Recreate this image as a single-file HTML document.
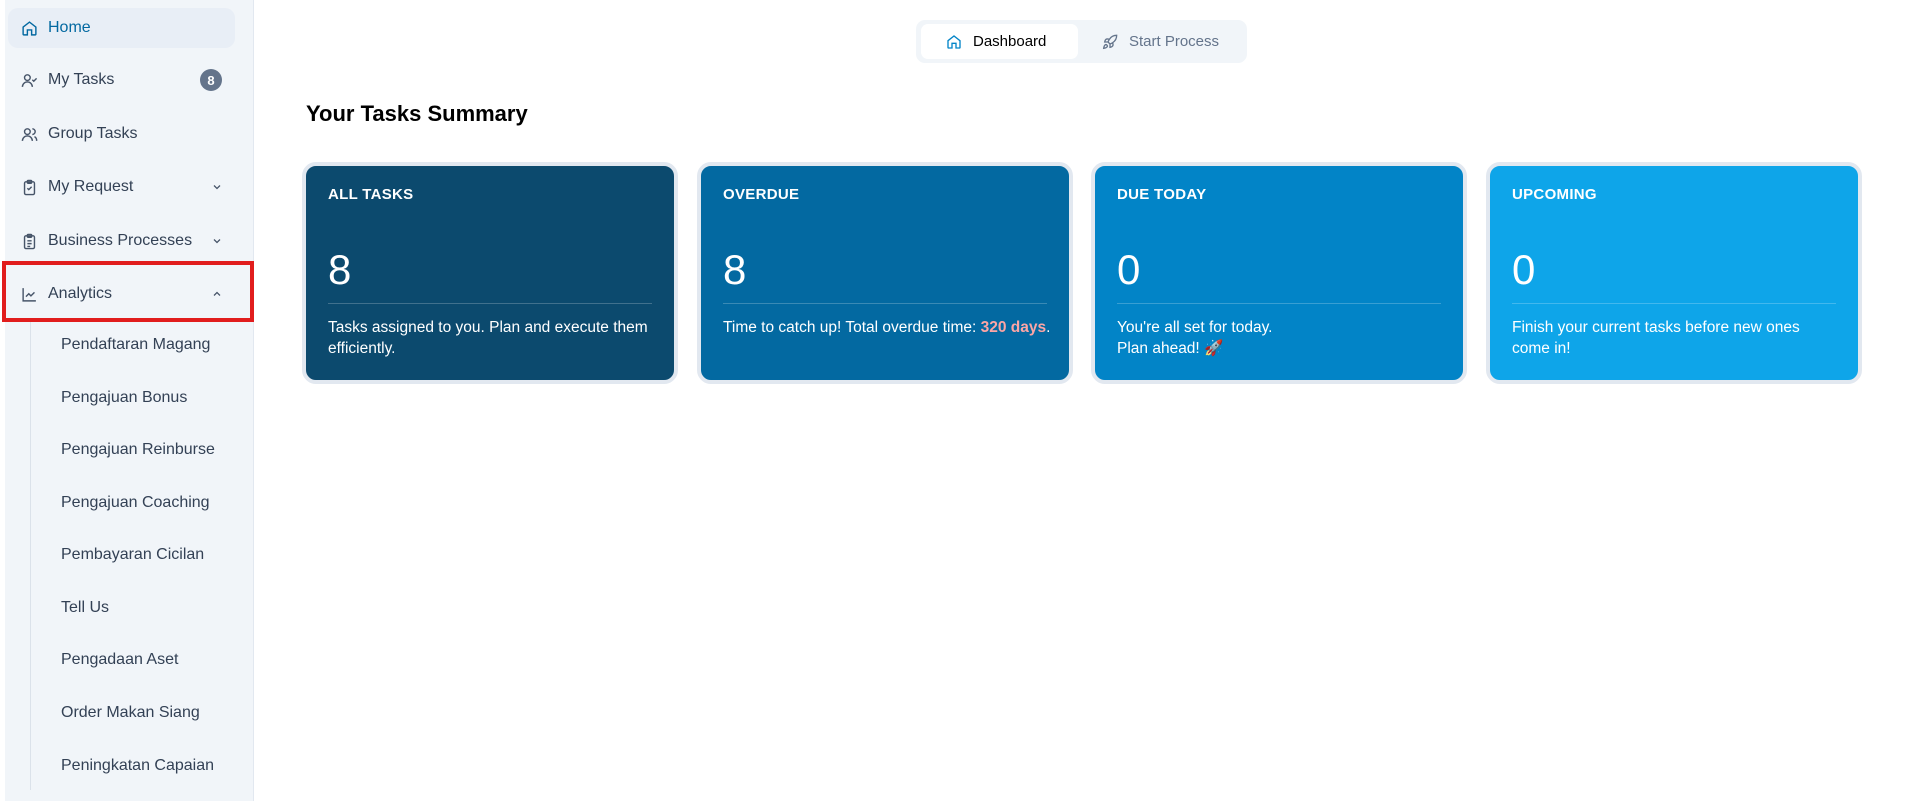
<!DOCTYPE html>
<html><head><meta charset="utf-8"><style>
*{box-sizing:border-box;margin:0;padding:0}
body{width:1908px;height:801px;overflow:hidden;background:#fff;font-family:"Liberation Sans",sans-serif;position:relative}
.sb{position:absolute;left:5px;top:0;width:249px;height:801px;background:#f1f5f9;border-right:1px solid #e2e8f0}
.it{position:absolute;left:3px;width:227px;height:40px;display:flex;align-items:center;font-size:16px;color:#334155}
.it svg{position:absolute;left:13px;width:17px;height:17px}
.it span{position:absolute;left:40px}
.it svg.ch{left:203px;width:12px;height:12px}
.home{background:#e8eef6;border-radius:10px;color:#0369a1}
.badge{position:absolute;left:192px;width:22px;height:22px;border-radius:50%;background:#64748b;color:#fff;font-size:13px;font-weight:bold;display:flex;align-items:center;justify-content:center}
.red{position:absolute;left:2px;top:261px;width:252px;height:61px;border:4px solid #e11d1d}
.vl{position:absolute;left:30px;top:322px;width:1px;height:468px;background:#dbe2ea}
.sub{position:absolute;left:61px;font-size:16px;color:#334155;transform:translateY(-50%)}
.tg{position:absolute;left:916px;top:20px;width:331px;height:43px;background:#f1f5f9;border-radius:9px}
.tg .a{position:absolute;left:5px;top:4px;width:157px;height:35px;background:#fff;border-radius:7px;font-size:15px;color:#000;display:flex;align-items:center;padding-left:52px}
.tg .b{position:absolute;left:213px;top:13px;font-size:15px;color:#64748b}
h1{position:absolute;left:306px;top:101px;font-size:22px;font-weight:bold;color:#000}
.card{position:absolute;top:162px;width:376px;height:222px;border-radius:14px;border:4px solid #e2e8f0;color:#fff}
.card .l{position:absolute;left:22px;top:20px;font-size:15px;font-weight:bold;letter-spacing:.3px}
.card .num{position:absolute;left:22px;top:80px;font-size:42px;font-weight:300}
.card .hr{position:absolute;left:22px;right:22px;top:137px;height:1px;background:rgba(255,255,255,.22)}
.card .d{position:absolute;left:22px;right:18px;top:151px;font-size:15.5px;line-height:21px}
</style></head><body>
<div class="sb">
<div class="it home" style="top:8px"><svg viewBox="0 0 24 24" fill="none" stroke="#0369a1" stroke-width="2"><path d="M3 10l9-7 9 7v10a1 1 0 0 1-1 1h-5v-7H9v7H4a1 1 0 0 1-1-1z"/></svg><span>Home</span></div>
<div class="it" style="top:60px"><svg viewBox="0 0 24 24" fill="none" stroke="#475569" stroke-width="2"><circle cx="9" cy="8" r="4"/><path d="M2 21a7 7 0 0 1 14 0M16 11l2 2 4-4"/></svg><span>My Tasks</span><div class="badge">8</div></div>
<div class="it" style="top:114px"><svg viewBox="0 0 24 24" fill="none" stroke="#475569" stroke-width="2"><circle cx="9" cy="8" r="4"/><path d="M2 21a7 7 0 0 1 14 0M16 4a4 4 0 0 1 0 8M19 15a6 6 0 0 1 3 6"/></svg><span>Group Tasks</span></div>
<div class="it" style="top:167px"><svg viewBox="0 0 24 24" fill="none" stroke="#475569" stroke-width="2"><rect x="5" y="4" width="14" height="18" rx="2"/><rect x="9" y="2" width="6" height="4" rx="1"/><path d="M9 13l2 2 4-4"/></svg><span>My Request</span><svg class="ch" viewBox="0 0 24 24" fill="none" stroke="#475569" stroke-width="2.5"><path d="M6 9l6 6 6-6"/></svg></div>
<div class="it" style="top:221px"><svg viewBox="0 0 24 24" fill="none" stroke="#475569" stroke-width="2"><rect x="5" y="4" width="14" height="18" rx="2"/><rect x="9" y="2" width="6" height="4" rx="1"/><path d="M9 11h6M9 15h6M9 19h4"/></svg><span>Business Processes</span><svg class="ch" viewBox="0 0 24 24" fill="none" stroke="#475569" stroke-width="2.5"><path d="M6 9l6 6 6-6"/></svg></div>
<div class="it" style="top:274px"><svg viewBox="0 0 24 24" fill="none" stroke="#475569" stroke-width="2"><path d="M3 3v18h18M7 15l4-4 3 3 5-5"/></svg><span>Analytics</span><svg class="ch" viewBox="0 0 24 24" fill="none" stroke="#475569" stroke-width="2.5"><path d="M6 15l6-6 6 6"/></svg></div>
</div>
<div class="red"></div>
<div class="vl"></div>
<div class="sub" style="top:345px">Pendaftaran Magang</div>
<div class="sub" style="top:398px">Pengajuan Bonus</div>
<div class="sub" style="top:450px">Pengajuan Reinburse</div>
<div class="sub" style="top:503px">Pengajuan Coaching</div>
<div class="sub" style="top:555px">Pembayaran Cicilan</div>
<div class="sub" style="top:608px">Tell Us</div>
<div class="sub" style="top:660px">Pengadaan Aset</div>
<div class="sub" style="top:713px">Order Makan Siang</div>
<div class="sub" style="top:766px">Peningkatan Capaian</div>
<div class="tg"><div class="a"><svg style="position:absolute;left:25px;top:10px" width="16" height="16" viewBox="0 0 24 24" fill="none" stroke="#0284c7" stroke-width="2"><path d="M3 10l9-7 9 7v10a1 1 0 0 1-1 1h-5v-7H9v7H4a1 1 0 0 1-1-1z"/></svg>Dashboard</div>
<svg style="position:absolute;left:186px;top:14px" width="16" height="16" viewBox="0 0 24 24" fill="none" stroke="#64748b" stroke-width="2"><path d="M4.5 16.5c-1.5 1.3-2 5-2 5s3.7-.5 5-2c.7-.8.7-2.1-.1-2.9a2.2 2.2 0 0 0-2.9-.1zM12 15l-3-3a22 22 0 0 1 2-4A13 13 0 0 1 22 2c0 2.7-.8 7.5-6 11a22 22 0 0 1-4 2zM9 12H4s.6-3 2-4c1.6-1.1 5 0 5 0M12 15v5s3-.6 4-2c1.1-1.6 0-5 0-5"/></svg>
<div class="b">Start Process</div></div>
<h1>Your Tasks Summary</h1>
<div class="card" style="left:302px;background:#0c4a6e"><div class="l">ALL TASKS</div><div class="num">8</div><div class="hr"></div><div class="d">Tasks assigned to you. Plan and execute them efficiently.</div></div>
<div class="card" style="left:697px;background:#0369a1"><div class="l">OVERDUE</div><div class="num">8</div><div class="hr"></div><div class="d">Time to catch up! Total overdue time: <b style="color:#fca5a5">320 days</b>.</div></div>
<div class="card" style="left:1091px;background:#0284c7"><div class="l">DUE TODAY</div><div class="num">0</div><div class="hr"></div><div class="d">You're all set for today.<br>Plan ahead! 🚀</div></div>
<div class="card" style="left:1486px;background:#0ea5e9"><div class="l">UPCOMING</div><div class="num">0</div><div class="hr"></div><div class="d">Finish your current tasks before new ones come in!</div></div>
</body></html>
